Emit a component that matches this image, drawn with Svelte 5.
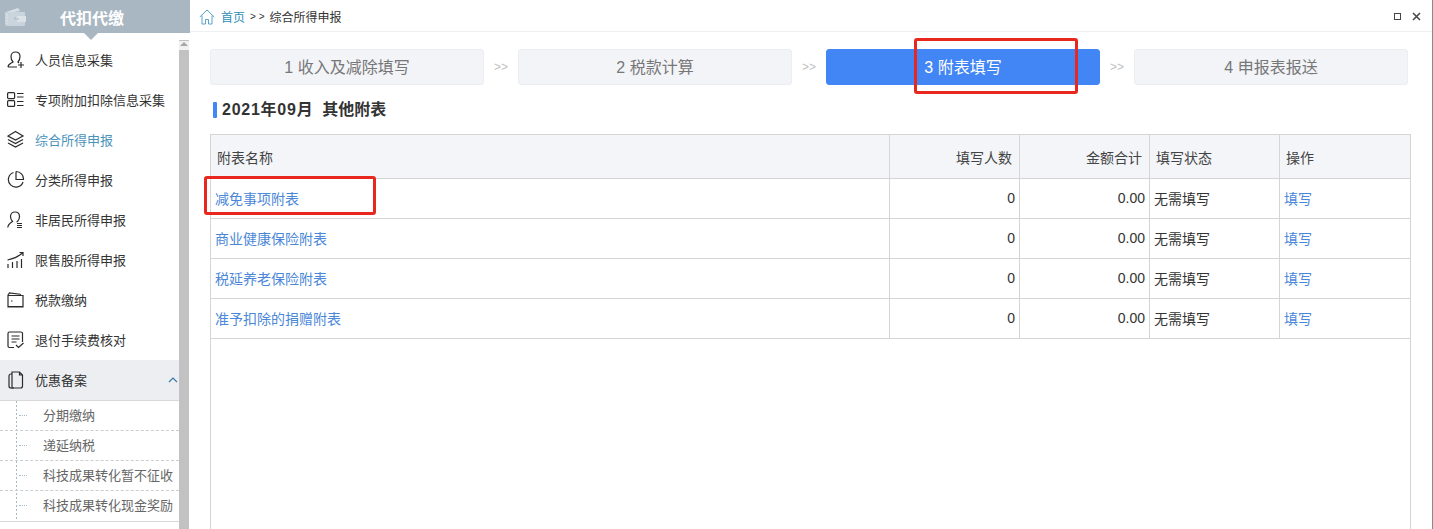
<script>
  const menu = [
    { label: '人员信息采集', icon: 'user' },
    { label: '专项附加扣除信息采集', icon: 'list' },
    { label: '综合所得申报', icon: 'layers', current: true },
    { label: '分类所得申报', icon: 'pie' },
    { label: '非居民所得申报', icon: 'person' },
    { label: '限售股所得申报', icon: 'chart' },
    { label: '税款缴纳', icon: 'wallet' },
    { label: '退付手续费核对', icon: 'doc' },
    { label: '优惠备案', icon: 'copy', open: true }
  ];
  const subs = ['分期缴纳', '递延纳税', '科技成果转化暂不征收', '科技成果转化现金奖励'];
  const steps = ['1 收入及减除填写', '2 税款计算', '3 附表填写', '4 申报表报送'];
  const rows = ['减免事项附表', '商业健康保险附表', '税延养老保险附表', '准予扣除的捐赠附表'];
</script>

<div class="page">
  <aside class="side">
    <div class="brand">
      <svg class="brand-icon" width="22" height="20" viewBox="0 0 22 20">
        <path d="M2 5 L14 1 L16 4 L3 6 Z" fill="#d8dfe5" />
        <path d="M1 5 H20 a1 1 0 0 1 1 1 V18 a1 1 0 0 1 -1 1 H3 a2 2 0 0 1 -2 -2 Z" fill="#cad4dc" />
        <path d="M3 7 V17" stroke="#e6ebef" stroke-dasharray="1.500 1.500" />
        <path d="M13 9 H22 V15 H13 Z" fill="#dbe2e8" />
        <path d="M10 12 h5 M10 12 l2 -2" stroke="#aebcc7" fill="none" />
      </svg>
      <span>代扣代缴</span>
      <i class="notch"></i>
    </div>
    <div class="side-body">
      <nav>
        {#each menu as m}
          <div class="item" class:current={m.current} class:open={m.open}>
            <svg class="ico" width="20" height="20" viewBox="0 0 20 20" fill="none" stroke="#2b2b2b" stroke-width="1.200">
              {#if m.icon === 'user'}
                <path d="M1 17 c0 -3 3 -3.500 5 -5 C4.500 10.500 4 9 4 6.500 c0 -3 2 -4.500 4.500 -4.500 s4.500 1.500 4.500 4.500 c0 2.500 -.5 4 -2 5.500 l1 1 M1 17 h9 M11 15 h6 M14 12 v6" />
              {:else if m.icon === 'list'}
                <rect x=".6" y="2.600" width="7" height="6" rx="1" /><rect x=".6" y="10.600" width="7" height="5.800" rx="1" />
                <path d="M10 3.500 h6.500 M10 7 h6.500 M10 11.500 h6.500 M10 15.500 h6.500" />
              {:else if m.icon === 'layers'}
                <path d="M8.500 1.500 L16 6 L8.500 10 L1 6 Z M1 9.500 L8.500 13.500 L16 9.500 M1 13 L8.500 17 L16 13" />
              {:else if m.icon === 'pie'}
                <path d="M6.500 2.500 a7.500 7.500 0 1 0 9.500 9.500 M9 1.500 v8 h7.500 a7.500 7.500 0 0 0 -7.500 -8" />
              {:else if m.icon === 'person'}
                <path d="M.8 17.500 c0 -3 2.500 -4.500 4.700 -6 C4 10 3.500 8.500 3.500 6.500 c0 -3 2 -4.500 4.500 -4.500 s4.500 1.500 4.500 4.500 c0 2 -.5 3.500 -2 5 l-1 .5 M10 13.500 h5 M10 15.500 h5 M10 17.500 h5" />
              {:else if m.icon === 'chart'}
                <path d="M1 18 v-4 M5.500 18 v-6 M10 18 v-7 M14.500 18 v-9 M.5 10 C6 9 11 7 15.500 3 M12.500 2.500 h3.500 v3.500" />
              {:else if m.icon === 'wallet'}
                <path d="M1 5 L2.500 3 L13 4.200 L14 5.500 H16 V17 H1 Z" /><path d="M1 16.500 H16 M1 5.500 H14" /><path d="M4 11 h1.500" />
              {:else if m.icon === 'doc'}
                <path d="M7 17.500 H2.500 a1.500 1.500 0 0 1 -1.500 -1.500 V3.500 a1.500 1.500 0 0 1 1.500 -1.500 H14 a1.500 1.500 0 0 1 1.500 1.500 V12 M4.500 6 h8 M4.500 9 h8 M4.500 12 h5 M9 15 l2.500 2.500 l5 -4.500" />
              {:else if m.icon === 'copy'}
                <path d="M5 2 H12.500 L15.500 5 V16 a2 2 0 0 1 -2 2 H5 Z M12.500 2 V5 H15.500" /><path d="M5 4 H4 a2 2 0 0 0 -2 2 V16 a2 2 0 0 0 2 2 H7" />
              {/if}
            </svg>
            <span>{m.label}</span>
            {#if m.open}
              <svg class="chev" width="10" height="6" viewBox="0 0 10 6" fill="none" stroke="#3a78a8" stroke-width="1.200"><path d="M1 5 L5 1 L9 5" /></svg>
            {/if}
          </div>
        {/each}
        <ul class="subs">
          {#each subs as s}
            <li><i></i>{s}</li>
          {/each}
        </ul>
      </nav>
      <div class="scrollbar"><b></b></div>
    </div>
  </aside>

  <main class="main">
    <header class="crumbs">
      <svg width="16" height="16" viewBox="0 0 16 16" fill="none" stroke="#5aa0c8" stroke-width="1"><path d="M.8 8 L8 1 L15.200 8 M3 6.500 V15 H6.500 V10.500 H9.500 V15 H13 V6.500" /></svg>
      <a>首页</a>
      <span class="sep">&gt; &gt;</span>
      <span>综合所得申报</span>
      <div class="win">
        <i class="max"></i>
        <svg width="9" height="9" viewBox="0 0 9 9" stroke="#444" stroke-width="1.500"><path d="M1 1 L8 8 M8 1 L1 8" /></svg>
      </div>
    </header>

    <section class="content">
      <div class="steps">
        {#each steps as s, i}
          {#if i > 0}<span class="arrow">&gt;&gt;</span>{/if}
          <div class="step" class:on={i === 2}>{s}</div>
        {/each}
      </div>

      <h2><span class="period">2021年09月</span>&nbsp; 其他附表</h2>

      <div class="frame">
        <table>
          <colgroup>
            <col class="c1" /><col class="c2" /><col class="c2" /><col class="c2" /><col class="c3" />
          </colgroup>
          <thead>
            <tr>
              <th class="name">附表名称</th>
              <th class="r">填写人数</th>
              <th class="r">金额合计</th>
              <th>填写状态</th>
              <th>操作</th>
            </tr>
          </thead>
          <tbody>
            {#each rows as r}
              <tr>
                <td><a>{r}</a></td>
                <td class="r">0</td>
                <td class="r">0.00</td>
                <td>无需填写</td>
                <td><a>填写</a></td>
              </tr>
            {/each}
          </tbody>
        </table>
      </div>
    </section>
  </main>

  <div class="mark mark-step"></div>
  <div class="mark mark-row"></div>
</div>

<style>
  :global(body) {
    margin: 0;
    background: #fff;
  }

  .page {
    position: relative;
    display: flex;
    width: 1433px;
    height: 529px;
    box-sizing: border-box;
    border-right: 1px solid #8a8a8a;
    overflow: hidden;
    font-family: "Liberation Sans", "Noto Sans CJK SC", sans-serif;
    font-size: 13px;
    color: #333;
  }

  .side {
    width: 190px;
    flex: none;
    display: flex;
    flex-direction: column;
  }

  .brand {
    position: relative;
    height: 33px;
    flex: none;
    display: flex;
    align-items: center;
    justify-content: center;
    background: #a9b7c3;
    color: #fff;
    font-size: 16px;
    font-weight: bold;
    padding-right: 6px;
    box-sizing: border-box;
  }

  .brand-icon {
    position: absolute;
    left: 4px;
    top: 7px;
  }

  .notch {
    position: absolute;
    left: 84px;
    top: 33px;
    border: 7px solid transparent;
    border-bottom: 0;
    border-top-color: #a9b7c3;
  }

  .side-body {
    flex: 1;
    display: flex;
    padding: 7px 1px 0 0;
    min-height: 0;
  }

  nav {
    flex: 1;
    min-width: 0;
  }

  .item {
    height: 40px;
    display: flex;
    align-items: center;
    gap: 8px;
    padding-left: 7px;
    position: relative;
  }

  .ico {
    flex: none;
  }

  .item span {
    padding-bottom: 2px;
  }

  .item.current span {
    color: #4a93bb;
  }

  .item.open {
    background: #eceef2;
  }

  .chev {
    position: absolute;
    right: 1px;
    top: 17px;
  }

  .subs {
    list-style: none;
    margin: 0;
    padding: 0;
    border-top: 1px solid #d8d8d8;
    border-bottom: 1px solid #d8d8d8;
    background: linear-gradient(#a9bac6 50%, transparent 50%) 16px 0 / 1px 4px repeat-y;
    height: 120px;
    box-sizing: content-box;
  }

  .subs li {
    position: relative;
    height: 30px;
    line-height: 29px;
    padding-left: 43px;
    box-sizing: border-box;
    border-bottom: 1px dashed #c9ced3;
    color: #666;
    white-space: nowrap;
    overflow: hidden;
  }

  .subs li:last-child {
    border-bottom: 0;
  }

  .subs li i {
    position: absolute;
    left: 19px;
    top: 14px;
    width: 8px;
    border-top: 1px dotted #a9bac6;
  }

  .scrollbar {
    width: 10px;
    flex: none;
    background: #c2c2c2;
    position: relative;
  }

  .scrollbar b {
    position: absolute;
    left: 0;
    top: 1px;
    width: 10px;
    height: 9px;
    background: #f1f1f1;
  }

  .scrollbar b::after {
    content: "";
    position: absolute;
    left: 1px;
    top: 1px;
    border: 4px solid transparent;
    border-top: 0;
    border-bottom-color: #a6a6a6;
  }

  .main {
    flex: 1;
    min-width: 0;
    display: flex;
    flex-direction: column;
  }

  .crumbs {
    height: 32px;
    flex: none;
    box-sizing: border-box;
    display: flex;
    align-items: center;
    padding: 2px 11px 0 9px;
    border-bottom: 1px solid #f0f0f0;
    font-size: 12px;
    color: #333;
  }

  .crumbs a {
    color: #2f8fb8;
    margin-left: 6px;
  }

  .sep {
    margin: 0 5px;
    font-size: 10px;
  }

  .win {
    margin-left: auto;
    display: flex;
    align-items: center;
    gap: 11px;
  }

  .max {
    width: 5px;
    height: 5px;
    border: 1.5px solid #444;
  }

  .content {
    flex: 1;
    min-height: 0;
    display: flex;
    flex-direction: column;
    padding: 17px 0 0 20px;
  }

  .steps {
    display: flex;
    align-items: center;
    width: 1198px;
  }

  .step {
    flex: 0 0 274px;
    height: 36px;
    line-height: 36px;
    box-sizing: border-box;
    text-align: center;
    background: #f2f4f7;
    border: 1px solid #ebedf0;
    border-radius: 3px;
    color: #777;
    font-size: 16px;
  }

  .step.on {
    background: #4285f4;
    border-color: #4285f4;
    color: #fff;
  }

  .arrow {
    width: 34px;
    text-align: center;
    color: #c0c0c0;
    font-size: 12px;
  }

  h2 {
    position: relative;
    margin: 14px 0 13px 3px;
    padding-left: 9px;
    height: 22px;
    flex: none;
    line-height: 22px;
    font-size: 16px;
    font-weight: bold;
    color: #333;
  }

  .period {
    letter-spacing: 0.75px;
  }

  h2::before {
    content: "";
    position: absolute;
    left: 0;
    top: 3px;
    width: 4px;
    height: 16px;
    border-radius: 1px;
    background: #4285f4;
  }

  .frame {
    flex: 1;
    width: 1201px;
    background:
      linear-gradient(#d5d5d5, #d5d5d5) left top / 1px 100% no-repeat,
      linear-gradient(#d5d5d5, #d5d5d5) right top / 1px 100% no-repeat;
  }

  table {
    width: 1200px;
    table-layout: fixed;
    border-collapse: collapse;
    font-size: 14px;
  }

  .c1 {
    width: 679px;
  }

  .c2 {
    width: 130px;
  }

  .c3 {
    width: 131px;
  }

  th,
  td {
    border: 1px solid #d5d5d5;
    padding: 0 4px 2px;
    height: 40px;
    box-sizing: border-box;
    text-align: left;
  }

  th {
    height: 44px;
    background: #f3f5f9;
    font-weight: normal;
    color: #444;
    padding: 0 6px;
  }

  th.r {
    text-align: right;
    padding-right: 7px;
  }

  td.r {
    text-align: right;
    padding-right: 4px;
  }

  td a {
    color: #4a87d8;
  }

  .mark {
    position: absolute;
    box-sizing: border-box;
    border: 3px solid #e8281e;
    border-radius: 3px;
  }

  .mark-step {
    left: 914px;
    top: 38px;
    width: 164px;
    height: 56px;
  }

  .mark-row {
    left: 204px;
    top: 176px;
    width: 172px;
    height: 39px;
  }
</style>
